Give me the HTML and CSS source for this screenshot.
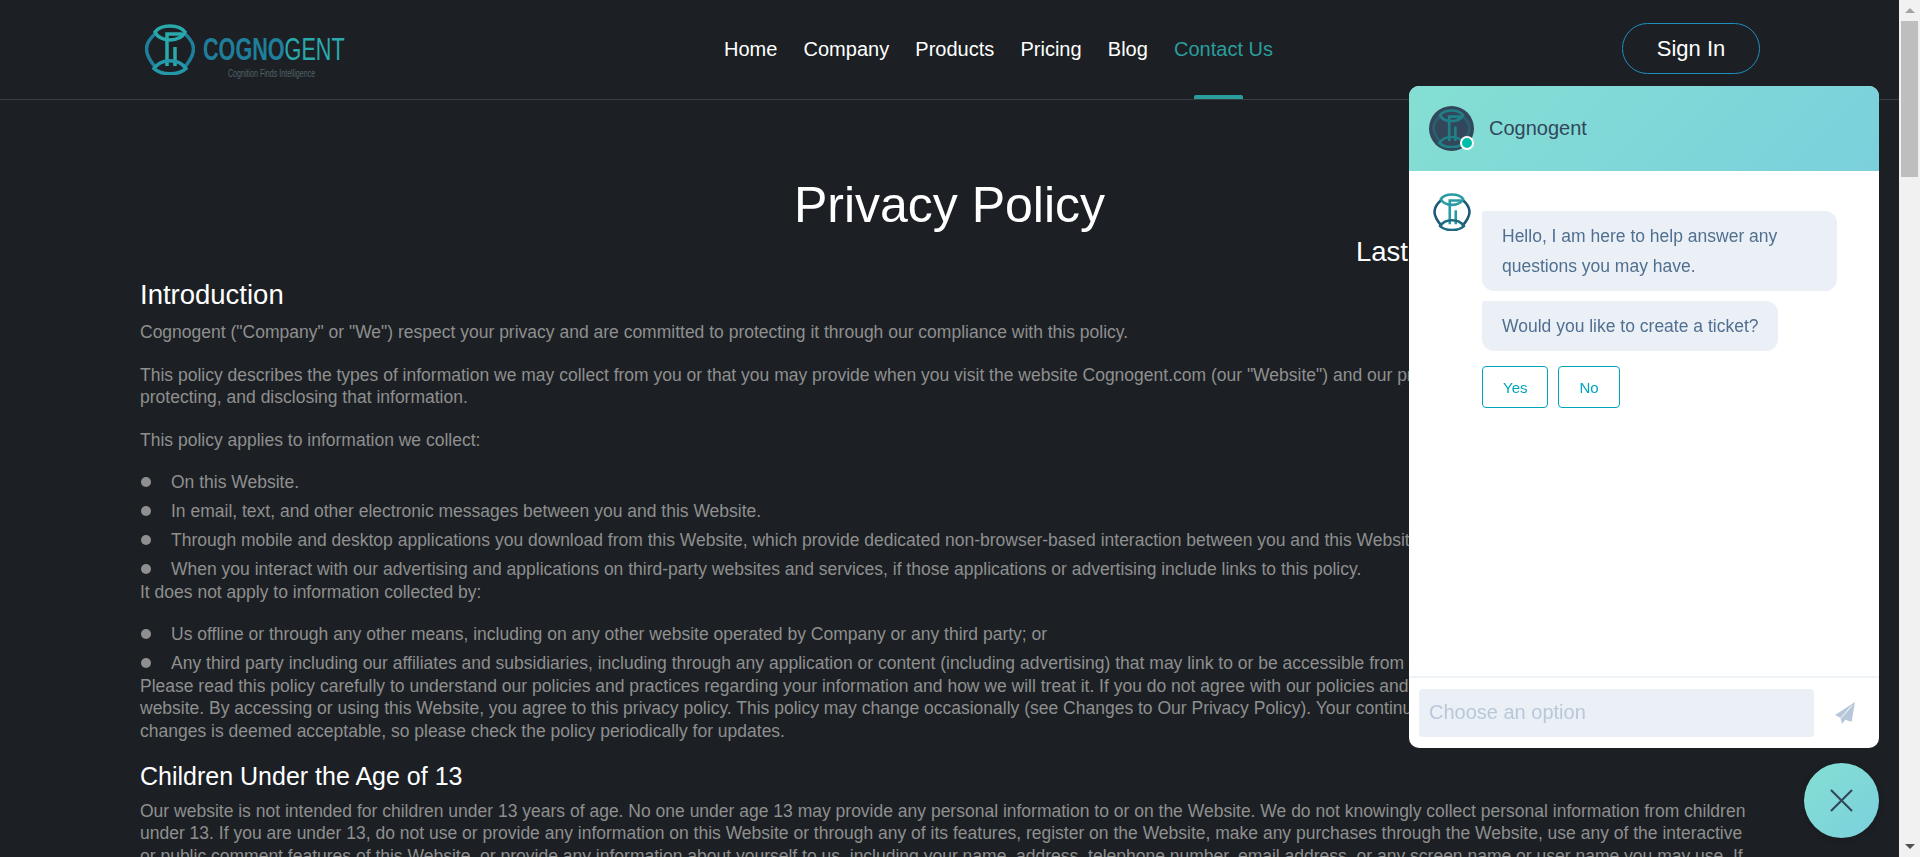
FILE: index.html
```html
<!DOCTYPE html>
<html lang="en">
<head>
  <meta charset="UTF-8">
  <meta name="viewport" content="width=device-width, initial-scale=1.0">
  <title>Privacy Policy - Cognogent</title>
  <link rel="stylesheet" href="styles.css">
</head>
<body>
  <!-- shared logo mark, used in the nav and in the chat -->
  <svg class="defs" width="0" height="0">
    <defs>
      <symbol id="mark" viewBox="0 0 50 51">
        <path class="mark-side" d="M11 9C4 15 1.500 20 1.500 25C1.500 31 5 37 11 44"/>
        <path class="mark-side" d="M39 9C46 15 48.500 20 48.500 25C48.500 31 45 37 39 44"/>
        <path class="mark-lens" d="M10 8C16 0 34 0 40 8C35 18.500 15 18.500 10 8Z"/>
        <path class="mark-lens" d="M22 42V10H37"/>
        <path class="mark-lens" d="M30 23V42"/>
        <path class="mark-base" d="M9 44.500C16 34 34 34 41 44.500C34 51.500 16 51.500 9 44.500Z"/>
      </symbol>
    </defs>
  </svg>

  <div class="page">
    <div class="main">
      <header class="topbar">
        <a class="brand" href="#">
          <svg class="mark brand-mark"><use href="#mark"/></svg>
          <span class="brand-text">
            <span class="wordmark"><b>COGNO</b>GENT</span>
            <span class="tagline">Cognition Finds Intelligence</span>
          </span>
        </a>
        <nav class="nav">
          <a href="#">Home</a>
          <a href="#">Company</a>
          <a href="#">Products</a>
          <a href="#">Pricing</a>
          <a href="#">Blog</a>
          <a href="#" class="active">Contact Us</a>
        </nav>
        <a class="signin" href="#">Sign In</a>
      </header>

      <article class="policy">
        <h1>Privacy Policy</h1>
        <div class="updated">Last Modified: August 17, 2023</div>

        <h2 class="first">Introduction</h2>
        <p>Cognogent ("Company" or "We") respect your privacy and are committed to protecting it through our compliance with this policy.</p>
        <p>This policy describes the types of information we may collect from you or that you may provide when you visit the website Cognogent.com (our "Website") and our practices for collecting, using, maintaining, protecting, and disclosing that information.</p>
        <p>This policy applies to information we collect:</p>
        <ul>
          <li>On this Website.</li>
          <li>In email, text, and other electronic messages between you and this Website.</li>
          <li>Through mobile and desktop applications you download from this Website, which provide dedicated non-browser-based interaction between you and this Website.</li>
          <li>When you interact with our advertising and applications on third-party websites and services, if those applications or advertising include links to this policy.</li>
        </ul>
        <p>It does not apply to information collected by:</p>
        <ul>
          <li>Us offline or through any other means, including on any other website operated by Company or any third party; or</li>
          <li>Any third party including our affiliates and subsidiaries, including through any application or content (including advertising) that may link to or be accessible from the Website.</li>
        </ul>
        <p>Please read this policy carefully to understand our policies and practices regarding your information and how we will treat it. If you do not agree with our policies and practices, your choice is not to use our website. By accessing or using this Website, you agree to this privacy policy. This policy may change occasionally (see Changes to Our Privacy Policy). Your continued use of this Website after we make changes is deemed acceptable, so please check the policy periodically for updates.</p>

        <h2>Children Under the Age of 13</h2>
        <p>Our website is not intended for children under 13 years of age. No one under age 13 may provide any personal information to or on the Website. We do not knowingly collect personal information from children under 13. If you are under 13, do not use or provide any information on this Website or through any of its features, register on the Website, make any purchases through the Website, use any of the interactive or public comment features of this Website, or provide any information about yourself to us, including your name, address, telephone number, email address, or any screen name or user name you may use. If we learn we have collected or received personal information from a child under 13, we will delete that information.</p>
      </article>
    </div>

    <div class="scrollbar">
      <div class="sb-btn"><span class="sb-up"></span></div>
      <div class="sb-thumb"></div>
      <div class="sb-track"></div>
      <div class="sb-btn"><span class="sb-down"></span></div>
    </div>
  </div>

  <div class="chat">
    <div class="chat-header">
      <div class="avatar">
        <svg class="mark avatar-mark"><use href="#mark"/></svg>
        <span class="online"></span>
      </div>
      <span class="chat-name">Cognogent</span>
    </div>
    <div class="chat-body">
      <svg class="mark bot-mark"><use href="#mark"/></svg>
      <div class="thread">
        <div class="bubble">Hello, I am here to help answer any questions you may have.</div>
        <div class="bubble">Would you like to create a ticket?</div>
        <div class="options">
          <button class="option">Yes</button>
          <button class="option">No</button>
        </div>
      </div>
    </div>
    <div class="chat-footer">
      <input class="chat-input" type="text" placeholder="Choose an option">
      <svg class="send" viewBox="0 0 20 22">
        <path d="M20 0L0 13L5.500 15.800L7 22L10.500 17.800L16.500 20Z"/>
        <path class="send-fold" d="M17 3.500L6 16"/>
      </svg>
    </div>
  </div>

  <button class="chat-toggle">
    <svg viewBox="0 0 24 24"><path d="M1 1L23 23M23 1L1 23"/></svg>
  </button>
</body>
</html>
```

FILE: styles.css
```css
html, body {
  margin: 0;
  height: 100%;
  overflow: hidden;
}
body {
  font-family: "Liberation Sans", Arial, sans-serif;
  background: #1c2024;
  color: #8f8f8f;
}
a { color: inherit; text-decoration: none; }
.defs { position: absolute; }

.page {
  display: flex;
  height: 100vh;
}
.main {
  flex: 1;
  min-width: 0;
  overflow: hidden;
}

/* top bar */
.topbar {
  display: flex;
  align-items: center;
  height: 99px;
  padding: 0 139px 0 145px;
  border-bottom: 1px solid #3a3d41;
}
.brand {
  display: flex;
  align-items: center;
  gap: 8px;
  width: 200px;
}
.mark {
  fill: none;
  stroke-width: 3.500;
  --lens: #2aa9ad;
  --side: #1f7f9a;
  --base: #2497a8;
}
.mark-lens { stroke: var(--lens); }
.mark-side { stroke: var(--side); }
.mark-base { stroke: var(--base); }
.brand-mark { width: 50px; height: 51px; flex: none; }
.brand-text {
  display: flex;
  flex-direction: column;
  align-items: flex-start;
  width: 142px;
  margin-top: 15px;
}
.wordmark {
  font-size: 32px;
  line-height: 30px;
  color: #2aa9ad;
  white-space: nowrap;
  transform: scaleX(.675);
  transform-origin: left center;
}
.wordmark b { color: #1f7f9a; }
.tagline {
  font-size: 11px;
  line-height: 13px;
  color: #52636b;
  white-space: nowrap;
  margin-left: 25px;
  margin-top: 3px;
  transform: scaleX(.645);
  transform-origin: left center;
}
.nav {
  display: flex;
  gap: 26.200px;
  margin-left: 379px;
  margin-top: -1px;
  font-size: 20px;
  color: #fff;
}
.nav .active {
  position: relative;
  color: #2a9d9d;
}
.nav .active:after {
  content: "";
  position: absolute;
  left: 20px;
  right: 30px;
  bottom: -38px;
  height: 4px;
  border-radius: 2px 2px 0 0;
  background: #2a9d9d;
}
.signin {
  margin-left: auto;
  margin-top: -2px;
  width: 138px;
  height: 51px;
  box-sizing: border-box;
  border: 1px solid #1e8fc0;
  border-radius: 26px;
  font-size: 22px;
  line-height: 49px;
  text-align: center;
  color: #fff;
}

/* policy text */
.policy {
  padding: 0 140px;
  font-size: 17.500px;
  line-height: 22.500px;
}
h1 {
  margin: 75px 0 0;
  font-size: 50px;
  line-height: 60px;
  font-weight: 400;
  text-align: center;
  color: #fff;
}
.updated {
  padding-left: 1216px;
  font-size: 27.500px;
  line-height: 34px;
  color: #fff;
  white-space: nowrap;
}
h2 {
  margin: -1px 0 8.500px;
  font-size: 25px;
  line-height: 30px;
  font-weight: 400;
  color: #fff;
}
h2.first {
  margin: 9px 0 9px;
  font-size: 27.500px;
  line-height: 34px;
}
p { margin: 0 0 20px; }
ul {
  list-style: none;
  margin: 0;
  padding: 0;
}
li { margin-bottom: 6.500px; }
li:last-child { margin-bottom: 0; }
li:before {
  content: "";
  display: inline-block;
  width: 10px;
  height: 10px;
  margin: 0 20px 1px 1px;
  border-radius: 50%;
  background: #8f8f8f;
}

/* fake scrollbar */
.scrollbar {
  display: flex;
  flex-direction: column;
  flex: none;
  width: 21px;
  background: #f1f1f1;
}
.sb-btn {
  display: flex;
  align-items: center;
  justify-content: center;
  height: 21px;
}
.sb-up {
  border: 5px solid transparent;
  border-top: 0;
  border-bottom-color: #a3a3a3;
}
.sb-down {
  border: 5px solid transparent;
  border-bottom: 0;
  border-top-color: #505050;
}
.sb-thumb {
  height: 156px;
  margin: 0 2px;
  background: #bebebe;
}
.sb-track { flex: 1; }

/* chat widget */
.chat {
  position: fixed;
  right: 41px;
  bottom: 109px;
  display: flex;
  flex-direction: column;
  width: 470px;
  height: 662px;
  border-radius: 10px;
  overflow: hidden;
  background: #fff;
}
.chat-header {
  display: flex;
  align-items: center;
  gap: 15px;
  height: 85px;
  padding-left: 20px;
  background: linear-gradient(135deg, #84dfd3, #7bd0dc);
}
.avatar {
  position: relative;
  display: flex;
  align-items: center;
  justify-content: center;
  width: 45px;
  height: 45px;
  border-radius: 50%;
  background: #33475b;
}
.avatar-mark {
  width: 39px;
  height: 39px;
  --lens: #1f8088;
  --side: #2b5f70;
  --base: #1f8088;
}
.online {
  position: absolute;
  right: 0;
  bottom: 1px;
  width: 10px;
  height: 10px;
  border: 2px solid #fff;
  border-radius: 50%;
  background: #00bda5;
}
.chat-name {
  font-size: 20px;
  color: #33475b;
}
.chat-body {
  flex: 1;
  display: flex;
  align-items: flex-start;
  padding: 22px 42px 0 24px;
}
.bot-mark {
  flex: none;
  width: 38px;
  height: 38px;
  --lens: #2a9aa3;
  --side: #1c5a78;
  --base: #1c6a80;
}
.thread {
  margin: 18px 0 0 11px;
  flex: 1;
  display: flex;
  flex-direction: column;
  align-items: flex-start;
  gap: 10px;
}
.bubble {
  padding: 10px 20px;
  border-radius: 2px 12px 12px 12px;
  background: #eaf0f6;
  color: #516f90;
  font-size: 17.500px;
  line-height: 30px;
}
.options {
  display: flex;
  gap: 10px;
  margin-top: 5px;
}
.option {
  min-width: 61px;
  height: 42px;
  padding: 0 20px;
  box-sizing: border-box;
  border: 1px solid #00a4bd;
  border-radius: 4px;
  background: #fff;
  color: #00a4bd;
  font-family: inherit;
  font-size: 15px;
}
.chat-footer {
  display: flex;
  align-items: center;
  gap: 21px;
  padding: 11px 0 11px 10px;
  border-top: 2px solid #eef3f8;
}
.chat-input {
  width: 395px;
  height: 48px;
  box-sizing: border-box;
  padding: 0 10px 2px;
  border: 0;
  border-radius: 4px;
  background: #eaf0f6;
  font-family: inherit;
  font-size: 20px;
}
.chat-input::placeholder { color: #b8c8da; }
.send {
  width: 20px;
  height: 22px;
  fill: #b6c7da;
}
.send-fold {
  fill: none;
  stroke: #fff;
  stroke-width: 1;
}
.chat-toggle {
  position: fixed;
  right: 41px;
  bottom: 19px;
  display: flex;
  align-items: center;
  justify-content: center;
  width: 75px;
  height: 75px;
  padding: 0;
  border: 0;
  border-radius: 50%;
  background: linear-gradient(135deg, #84dfd3, #7bd0dc);
  box-shadow: 0 1px 6px rgba(0,0,0,0.2);
}
.chat-toggle svg {
  width: 23px;
  height: 23px;
  fill: none;
  stroke: #33475b;
  stroke-width: 2.200;
}
```
